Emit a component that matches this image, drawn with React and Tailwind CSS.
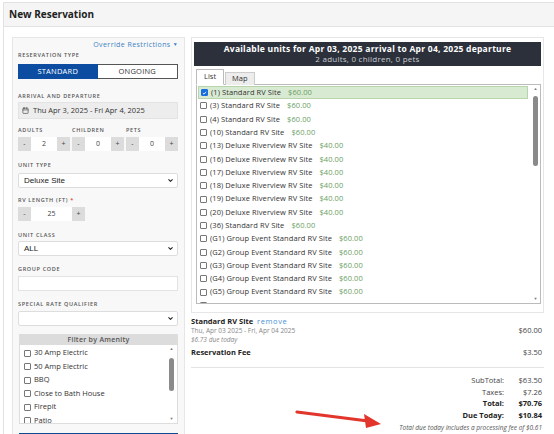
import { ChevronDown, Calendar } from "lucide-react";

const units = [
    { id: "1", name: "Standard RV Site", price: "$60.00", checked: true },
    { id: "3", name: "Standard RV Site", price: "$60.00" },
    { id: "4", name: "Standard RV Site", price: "$60.00" },
    { id: "10", name: "Standard RV Site", price: "$60.00" },
    { id: "13", name: "Deluxe Riverview RV Site", price: "$40.00" },
    { id: "16", name: "Deluxe Riverview RV Site", price: "$40.00" },
    { id: "17", name: "Deluxe Riverview RV Site", price: "$40.00" },
    { id: "18", name: "Deluxe Riverview RV Site", price: "$40.00" },
    { id: "19", name: "Deluxe Riverview RV Site", price: "$40.00" },
    { id: "20", name: "Deluxe Riverview RV Site", price: "$40.00" },
    { id: "36", name: "Standard RV Site", price: "$60.00" },
    { id: "G1", name: "Group Event Standard RV Site", price: "$60.00" },
    { id: "G2", name: "Group Event Standard RV Site", price: "$60.00" },
    { id: "G3", name: "Group Event Standard RV Site", price: "$60.00" },
    { id: "G4", name: "Group Event Standard RV Site", price: "$60.00" },
    { id: "G5", name: "Group Event Standard RV Site", price: "$60.00" },
    { id: "G6", name: "Group Event Standard RV Site", price: "$60.00" },
];

const amenities = ["30 Amp Electric", "50 Amp Electric", "BBQ", "Close to Bath House", "Firepit", "Patio"];

function Box({ checked }) {
    return (
        <span
            className={
                "inline-flex items-center justify-center w-[7px] h-[7px] rounded-[1px] border shrink-0 " +
                (checked ? "bg-[#1a6fe0] border-[#1a6fe0]" : "bg-white border-[#777]")
            }
        >
            {checked && (
                <svg viewBox="0 0 8 8" className="w-[6px] h-[6px]">
                    <path d="M1.5 4.2 L3.2 5.8 L6.5 2.2" fill="none" stroke="white" strokeWidth="1.4" />
                </svg>
            )}
        </span>
    );
}

function Label({ children, className = "" }) {
    return (
        <div className={"h-[8px] leading-[8px] text-[5.5px] font-semibold tracking-[0.12em] text-[#555] uppercase " + className}>
            {children}
        </div>
    );
}

function Spinner({ value, className = "" }) {
    return (
        <div className={"flex h-[14px] " + className}>
            <div className="w-[13px] bg-[#dcdcdc] flex items-center justify-center text-[7px] text-[#444]">-</div>
            <div className="flex-1 bg-white flex items-center justify-center text-[7px] text-[#444]">{value}</div>
            <div className="w-[13px] bg-[#dcdcdc] flex items-center justify-center text-[7px] text-[#444]">+</div>
        </div>
    );
}

function Select({ value, className = "" }) {
    return (
        <div
            className={
                "h-[15px] bg-white border border-[#ddd] rounded-[2px] flex items-center justify-between pl-[5px] pr-[3px] " +
                className
            }
        >
            <span className="text-[8px] text-[#222] font-['Liberation_Sans',Arial,sans-serif]">{value}</span>
            <ChevronDown className="w-[7px] h-[7px] text-[#222]" strokeWidth={3.5} />
        </div>
    );
}

function Scrollbar({ thumbTop, thumbHeight }) {
    return (
        <div className="relative w-[7px] h-full flex flex-col items-center">
            <div className="text-[4px] leading-[6px] text-[#777]">▲</div>
            <div className="flex-1 w-full relative">
                <div
                    className="absolute left-[1px] right-[1px] rounded-full bg-[#8a8a8a]"
                    style={{ top: thumbTop, height: thumbHeight }}
                />
            </div>
            <div className="text-[4px] leading-[6px] text-[#777]">▼</div>
        </div>
    );
}

export default function App() {
    return (
        <div className="relative w-[554px] h-[434px] overflow-hidden bg-white pt-[2px] pl-[3px] font-['Open_Sans',sans-serif] text-[#333]">
            <div className="border-t border-l border-[#e2e2e2] h-full">
                <div className="h-[24px] bg-[#f5f5f5] border-b border-[#e3e3e3] flex items-center pl-[5px]">
                    <span className="text-[10px] font-bold text-[#222]">New Reservation</span>
                </div>

                <div className="flex gap-[6px] pl-[8px] pt-[10px]">
                    {/* left column */}
                    <div className="w-[173px] h-[420px] bg-[#f8f8f8] border border-[#e6e6e6] pl-[5px] pr-[6px] pt-[2px]">
                        <div className="flex justify-end items-center h-[10px] gap-[2px] text-[#3b82c4] text-[7px] tracking-[0.06em]">
                            Override Restrictions
                            <span className="text-[5px]">▼</span>
                        </div>
                        <Label className="mt-[1px]">Reservation Type</Label>
                        <div className="flex h-[15px] mt-[5px] text-[7.5px] tracking-[0.03em]">
                            <div className="flex-1 bg-[#0c4da2] text-white flex items-center justify-center">STANDARD</div>
                            <div className="flex-1 bg-white border border-[#555] border-l-0 text-[#333] flex items-center justify-center">
                                ONGOING
                            </div>
                        </div>

                        <Label className="mt-[13px]">Arrival and Departure</Label>
                        <div className="h-[17px] mt-[2px] bg-[#ededed] border border-[#e3e3e3] flex items-center pl-[3px] gap-[4px]">
                            <Calendar className="w-[7px] h-[7px] text-[#555]" strokeWidth={2.5} />
                            <span className="text-[7.5px] text-[#333]">Thu Apr 3, 2025 - Fri Apr 4, 2025</span>
                        </div>

                        <div className="flex gap-[2px] mt-[7px]">
                            <div className="flex-1">
                                <Label>Adults</Label>
                                <Spinner value="2" className="mt-[3px]" />
                            </div>
                            <div className="flex-1">
                                <Label>Children</Label>
                                <Spinner value="0" className="mt-[3px]" />
                            </div>
                            <div className="flex-1">
                                <Label>Pets</Label>
                                <Spinner value="0" className="mt-[3px]" />
                            </div>
                        </div>

                        <Label className="mt-[10px]">Unit Type</Label>
                        <Select value="Deluxe Site" className="mt-[4px]" />

                        <Label className="mt-[8px]">
                            RV Length (ft) <span className="text-[#d33]">*</span>
                        </Label>
                        <Spinner value="25" className="mt-[3px] w-[67px]" />

                        <Label className="mt-[10px]">Unit Class</Label>
                        <Select value="ALL" className="mt-[2px]" />

                        <Label className="mt-[9px]">Group Code</Label>
                        <div className="h-[15px] mt-[3px] bg-white border border-[#e3e3e3]" />

                        <Label className="mt-[9px]">Special Rate Qualifier</Label>
                        <Select value="" className="mt-[3px]" />

                        <div className="mt-[8px] ml-[1px] border border-[#ddd]">
                            <div className="h-[10px] bg-[#dcdcdc] flex items-center justify-center text-[7px] font-semibold text-[#555] tracking-[0.04em]">
                                Filter by Amenity
                            </div>
                            <div className="h-[78px] bg-white flex overflow-hidden">
                                <div className="flex-1 pl-[4px] pt-[4px] flex flex-col gap-[5.5px]">
                                    {amenities.map((a) => (
                                        <div key={a} className="flex items-center gap-[3px] h-[8px]">
                                            <Box />
                                            <span className="text-[7.5px] text-[#333]">{a}</span>
                                        </div>
                                    ))}
                                </div>
                                <div className="pr-[2px] py-[1px]">
                                    <Scrollbar thumbTop={6} thumbHeight={33} />
                                </div>
                            </div>
                        </div>
                        <div className="mt-[9px] ml-[1px] h-[14px] bg-[#0c4a94]" />
                    </div>

                    {/* right column */}
                    <div className="w-[353px]">
                        <div className="border border-[#e6e6e6] pt-[4px] px-[2px] pb-[8px]">
                            <div className="h-[24px] bg-[#2b303a] flex flex-col items-center justify-center leading-[10px]">
                                <div className="text-[8.5px] font-bold text-white tracking-[0.03em]">
                                    Available units for Apr 03, 2025 arrival to Apr 04, 2025 departure
                                </div>
                                <div className="text-[8px] text-[#c9ccd2] tracking-[0.03em]">2 adults, 0 children, 0 pets</div>
                            </div>

                            <div className="flex items-end h-[19px] pl-[2px] gap-[1px] relative z-10">
                                <div className="h-[16px] px-[7px] bg-white border border-[#bbb] border-b-white flex items-center text-[7.5px] text-[#333]">
                                    List
                                </div>
                                <div className="h-[13px] px-[6px] bg-[#ededed] border border-[#ccc] border-b-0 flex items-center text-[7.5px] text-[#333]">
                                    Map
                                </div>
                            </div>
                            <div className="ml-[2px] -mt-[1px] h-[220px] border border-[#bbb] flex overflow-hidden">
                                <div className="flex-1 pl-[1px] pt-[1px] pr-[4px]">
                                    {units.map((u) => (
                                        <div
                                            key={u.id}
                                            className={
                                                "h-[13.3px] flex items-center gap-[3px] pl-[2px] text-[7.5px] tracking-[0.01em] " +
                                                (u.checked ? "bg-[#d9ead3] border border-[#b7d4aa]" : "")
                                            }
                                        >
                                            <Box checked={u.checked} />
                                            <span className="text-[#333]">
                                                ({u.id}) {u.name}
                                            </span>
                                            <span className="ml-[4px] text-[#6a9e62]">{u.price}</span>
                                        </div>
                                    ))}
                                </div>
                                <div className="py-[1px] pr-[1px]">
                                    <Scrollbar thumbTop={4} thumbHeight={70} />
                                </div>
                            </div>
                        </div>

                        <div className="flex justify-between items-center pt-[4px] pr-[2px]">
                            <div className="leading-[9px]">
                                <div className="text-[7.5px] font-bold text-[#222]">
                                    Standard RV Site{" "}
                                    <span className="font-normal text-[#4a8fd6] tracking-[0.08em] ml-[2px]">remove</span>
                                </div>
                                <div className="text-[6.5px] text-[#888]">Thu, Apr 03 2025 - Fri, Apr 04 2025</div>
                                <div className="text-[6.5px] italic text-[#888]">$6.73 due today</div>
                            </div>
                            <div className="text-[7.5px] text-[#444]">$60.00</div>
                        </div>
                        <div className="flex justify-between items-center mt-[3px] pr-[2px]">
                            <div className="text-[7.5px] font-bold text-[#222]">Reservation Fee</div>
                            <div className="text-[7.5px] text-[#444]">$3.50</div>
                        </div>
                        <div className="border-t border-[#e3e3e3] mt-[9px]" />
                        <div className="pt-[7px] pr-[2px] flex flex-col items-end text-[7.5px] leading-[11.6px] text-[#444]">
                            {[
                                ["SubTotal:", "$63.50", false],
                                ["Taxes:", "$7.26", false],
                                ["Total:", "$70.76", true],
                                ["Due Today:", "$10.84", true],
                            ].map(([k, v, b]) => (
                                <div key={k} className={"flex " + (b ? "font-bold text-[#222]" : "")}>
                                    <span className="text-right">{k}</span>
                                    <span className="w-[38px] text-right">{v}</span>
                                </div>
                            ))}
                            <div className="italic text-[6.5px] text-[#555]">Total due today includes a processing fee of $0.61</div>
                        </div>
                    </div>
                </div>
            </div>

            <svg className="absolute left-0 top-0 pointer-events-none" width="554" height="434">
                <line x1="297" y1="412" x2="368" y2="421" stroke="#e2352b" strokeWidth="3.2" strokeLinecap="round" />
                <polygon points="381,424 364,414 366,428" fill="#e2352b" />
            </svg>
        </div>
    );
}
